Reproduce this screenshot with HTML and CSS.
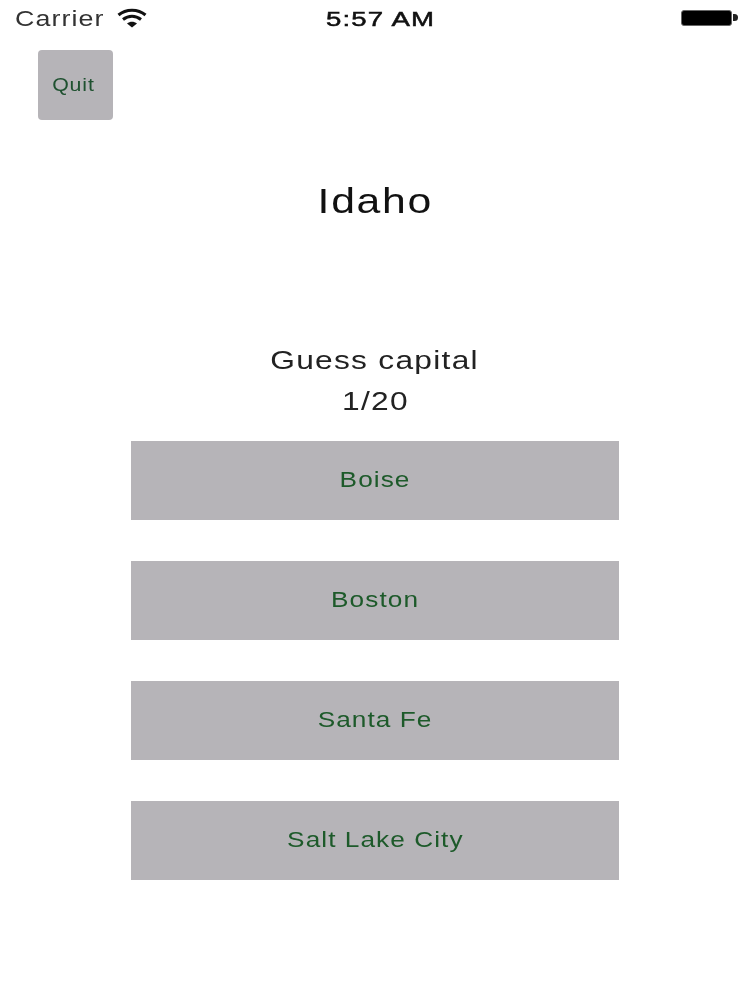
FILE: index.html
```html
<!DOCTYPE html>
<html lang="en">
<head>
<meta charset="utf-8">
<title>Guess capital</title>
<link rel="stylesheet" href="styles.css">
</head>
<body>
<div class="screen">
  <header class="status">
    <div class="status-left">
      <span class="wide wide-left">Carrier</span>
      <svg class="wifi" viewBox="0 0 30 20" width="30" height="20" aria-hidden="true">
        <path d="M1.5 7C9 .5 21 .5 28.500 7" fill="none" stroke="#111" stroke-width="3"/>
        <path d="M6 11.500C11.500 7 18.500 7 24 11.500" fill="none" stroke="#111" stroke-width="3"/>
        <path d="M10 15.500C13 13 17 13 20 15.500L15 19.500Z" fill="#111"/>
      </svg>
    </div>
    <div class="status-time"><span class="wide wide-time">5:57 AM</span></div>
    <div class="status-right">
      <span class="battery"></span><span class="battery-tip"></span>
    </div>
  </header>
  <div class="quit-row"><button class="quit"><span class="wide">Quit</span></button></div>
  <h1 class="state"><span class="wide">Idaho</span></h1>
  <p class="prompt"><span class="wide">Guess capital</span></p>
  <p class="count"><span class="wide">1/20</span></p>
  <div class="answers">
    <button class="answer"><span class="wide">Boise</span></button>
    <button class="answer"><span class="wide">Boston</span></button>
    <button class="answer"><span class="wide">Santa Fe</span></button>
    <button class="answer"><span class="wide">Salt Lake City</span></button>
  </div>
</div>
</body>
</html>
```

FILE: styles.css
```css
* { box-sizing: border-box; }
html, body { margin: 0; padding: 0; background: #fff; }
body { font-family: "Liberation Sans", Arial, sans-serif; color: #111; }
.screen { width: 750px; height: 1000px; overflow: hidden; display: flex; flex-direction: column; filter: blur(0.7px); }
.wide { display: inline-block; transform: scaleX(1.22); letter-spacing: 0.04em; white-space: nowrap; }
.status { height: 38px; padding: 0 12px 0 15px; display: grid; grid-template-columns: 1fr auto 1fr; align-items: center; font-size: 21px; }
.status-left { display: flex; align-items: center; gap: 30px; color: #333; }
.wide-left { width: 72px; font-size: 22px; transform-origin: left center; }
.wifi { display: block; margin-bottom: 2px; }
.status-time { width: 100px; margin-left: 8px; text-align: center; font-size: 20px; color: #111; -webkit-text-stroke: 0.5px #111; white-space: nowrap; }
.wide-time { transform: scaleX(1.38); }
.status-right { display: flex; justify-content: flex-end; align-items: center; gap: 1px; padding-bottom: 3px; }
.battery { width: 51px; height: 16px; background: #000; border: 1px solid #666; border-radius: 3px; }
.battery-tip { width: 5px; height: 7px; background: #222; border-radius: 0 4px 4px 0; }
.quit-row { padding: 12px 0 0 38px; }
.quit { display: block; width: 75px; height: 70px; padding: 0 4px 0 0; border: 0; border-radius: 4px; background: #b6b4b8; color: #1f5130; font: 17.500px "Liberation Sans", Arial, sans-serif; }
.state { margin: 59px 0 0; text-align: center; font-size: 35px; line-height: 44px; font-weight: 400; color: #111; }
.prompt { margin: 117px 0 0; text-align: center; font-size: 26px; line-height: 41px; color: #222; }
.count { margin: 0; text-align: center; font-size: 26px; line-height: 40px; color: #222; }
.answers { margin: 19.500px 0 0 131px; width: 488px; display: flex; flex-direction: column; gap: 41px; }
.answer { display: block; width: 100%; height: 79px; padding: 1px 0 0; border: 0; background: #b6b4b8; color: #1d5a2a; font: 21.500px "Liberation Sans", Arial, sans-serif; }
```
